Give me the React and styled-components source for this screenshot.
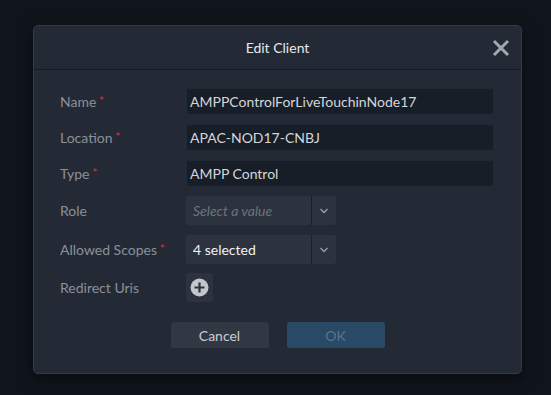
import React from 'react';
import styled, { createGlobalStyle } from 'styled-components';

const GlobalStyle = createGlobalStyle`
  html, body {
    margin: 0;
    padding: 0;
    background: #10151c;
    font-family: Lato, "Open Sans", sans-serif;
  }
`;

const Page = styled.div`
  width: 551px;
  height: 395px;
  padding: 25px 0 0 33px;
  box-sizing: border-box;
`;

const Dialog = styled.div`
  width: 489px;
  height: 349px;
  box-sizing: border-box;
  background: #242a35;
  border: 1px solid #343b47;
  border-radius: 5px;
  box-shadow: 0 4px 14px rgba(0, 0, 0, 0.5);
  display: flex;
  flex-direction: column;
`;

const Header = styled.div`
  height: 43px;
  display: flex;
  align-items: center;
  justify-content: center;
  position: relative;
  border-bottom: 1px solid #161b22;
  color: #e6e8eb;
  font-size: 14px;
`;

const Close = styled.button`
  position: absolute;
  right: 9px;
  top: 11px;
  width: 22px;
  height: 22px;
  padding: 0;
  border: 0;
  background: none;
  cursor: pointer;
  display: flex;
  align-items: center;
  justify-content: center;
`;

const Body = styled.div`
  padding: 18px 26px 0 26px;
  display: flex;
  flex-direction: column;
`;

const Row = styled.div`
  display: flex;
  align-items: center;
  height: ${(p) => p.h}px;
  margin-bottom: ${(p) => p.gap}px;
`;

const Label = styled.div`
  width: 126px;
  color: #8b9099;
  font-size: 14px;
`;

const Star = styled.span`
  color: #e0303c;
  font-size: 11px;
  margin-left: 3px;
  vertical-align: 2px;
`;

const Input = styled.div`
  width: 308px;
  height: 27px;
  box-sizing: border-box;
  background: #181e27;
  border: 1px solid #222935;
  border-radius: 3px;
  color: #d3d6da;
  font-size: 14px;
  display: flex;
  align-items: center;
  padding-left: 3px;
`;

const Select = styled.div`
  width: 150px;
  height: 29px;
  box-sizing: border-box;
  background: #2c333e;
  border-radius: 3px;
  display: flex;
  align-items: stretch;
`;

const SelectValue = styled.div`
  flex: 1;
  display: flex;
  align-items: center;
  padding-left: 7px;
  font-size: 14px;
  color: ${(p) => (p.placeholder ? '#6d737c' : '#f0f2f4')};
  font-style: ${(p) => (p.placeholder ? 'italic' : 'normal')};
`;

const Caret = styled.div`
  width: 24px;
  border-left: 1px solid #1a1f27;
  display: flex;
  align-items: center;
  justify-content: center;
`;

const AddButton = styled.button`
  width: 27px;
  height: 29px;
  padding: 0;
  border: 0;
  border-radius: 3px;
  background: #2c333e;
  display: flex;
  align-items: center;
  justify-content: center;
  cursor: pointer;
`;

const Footer = styled.div`
  display: flex;
  justify-content: center;
  gap: 18px;
  margin-top: 20px;
`;

const Button = styled.button`
  width: 98px;
  height: 26px;
  border: 0;
  border-radius: 3px;
  font-family: inherit;
  font-size: 14px;
  background: ${(p) => (p.primary ? '#2a4966' : '#323843')};
  color: ${(p) => (p.primary ? '#5a7590' : '#c9ccd1')};
  cursor: pointer;
`;

const ChevronDown = () => (
  <svg width="10" height="6" viewBox="0 0 10 6">
    <path d="M1.5 1l3.5 3.5L8.5 1" fill="none" stroke="#9aa0a8" strokeWidth="1.3" />
  </svg>
);

const fields = [
  { label: 'Name', value: 'AMPPControlForLiveTouchinNode17' },
  { label: 'Location', value: 'APAC-NOD17-CNBJ' },
  { label: 'Type', value: 'AMPP Control' },
];

export default function App() {
  return (
    <>
      <GlobalStyle />
      <Page>
        <Dialog>
          <Header>
            Edit Client
            <Close>
              <svg width="20" height="20" viewBox="0 0 20 20">
                <path d="M3 3l14 14M17 3L3 17" stroke="#a3a8ae" strokeWidth="3" />
              </svg>
            </Close>
          </Header>
          <Body>
            {fields.map((f) => (
              <Row key={f.label} h={27} gap={9}>
                <Label>
                  {f.label}
                  <Star>*</Star>
                </Label>
                <Input>{f.value}</Input>
              </Row>
            ))}
            <Row h={29} gap={10}>
              <Label>Role</Label>
              <Select>
                <SelectValue placeholder>Select a value</SelectValue>
                <Caret>
                  <ChevronDown />
                </Caret>
              </Select>
            </Row>
            <Row h={29} gap={9}>
              <Label>
                Allowed Scopes
                <Star>*</Star>
              </Label>
              <Select>
                <SelectValue>4 selected</SelectValue>
                <Caret>
                  <ChevronDown />
                </Caret>
              </Select>
            </Row>
            <Row h={29} gap={0}>
              <Label>Redirect Uris</Label>
              <AddButton>
                <svg width="19" height="19" viewBox="0 0 19 19">
                  <circle cx="9.5" cy="9.5" r="9" fill="#c3c6ca" />
                  <path d="M9.5 4.5v10M4.5 9.5h10" stroke="#2c333e" strokeWidth="2.2" />
                </svg>
              </AddButton>
            </Row>
            <Footer>
              <Button>Cancel</Button>
              <Button primary>OK</Button>
            </Footer>
          </Body>
        </Dialog>
      </Page>
    </>
  );
}
